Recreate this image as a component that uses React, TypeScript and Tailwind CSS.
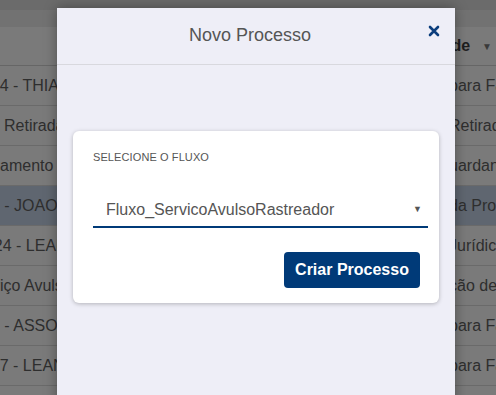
import React from "react";

const rows = [
  { l: "2024 - THIAGO", lm: "-27px", r: "para Faturamento", hl: false },
  { l: " Retirada de Equipamento", lm: "4px", r: "Retirada de Equipamento", hl: false },
  { l: "amento - X", lm: "0px", r: "uardando Análise", hl: false },
  { l: "0 - JOAO SILVA", lm: "-9px", r: "da Produção", hl: true },
  { l: "2024 - LEANDRO", lm: "-24px", r: " Jurídico", hl: false },
  { l: "viço Avulso", lm: "-8px", r: "ção de Serviço", hl: false },
  { l: "0 - ASSOCIADO", lm: "-9px", r: "para Faturamento", hl: false },
  { l: "2017 - LEANDRO", lm: "-27px", r: "para Faturamento", hl: false },
  { l: "", lm: "0px", r: "", hl: false },
];

export default function App() {
  return (
    <div
      className="relative w-[496px] h-[395px] overflow-hidden bg-[#7a7a7a]"
      style={{ fontFamily: '"Liberation Sans", Arial, sans-serif' }}
    >
      {/* background page (dimmed) */}
      <div className="flex flex-col">
        <div className="h-[10px] bg-[#6b6b6b]" />
        <div className="h-[17px] bg-[#727272]" />
        <div className="h-[39px] border-b border-[#666] flex items-center justify-end pr-[4px] text-[16px] text-[#1e1e1e]">
          <span className="font-bold">de</span>
          <span className="ml-[12px] text-[10px] text-[#3a3a3a]">▼</span>
        </div>
        {rows.map((r, i) => (
          <div
            key={i}
            className={`h-[40px] border-b border-[#6a6a6a] flex items-center justify-between text-[16px] text-[#2e2e2e] whitespace-nowrap overflow-hidden ${
              r.hl ? "bg-[#5f6670]" : ""
            }`}
          >
            <span className="min-w-0" style={{ marginLeft: r.lm }}>{r.l}</span>
            <span className="w-[47px] shrink-0 overflow-hidden flex justify-start">
              <span>{r.r}</span>
            </span>
          </div>
        ))}
      </div>

      {/* modal */}
      <div className="absolute left-[57px] top-[8px] w-[398px] h-[400px] bg-[#eeeef7] shadow-[0_0_12px_rgba(0,0,0,0.35)] flex flex-col">
        <div className="h-[57px] border-b border-[#d8d8de] flex items-center justify-center relative">
          <span className="text-[18px] text-[#555] mr-[12px] mt-[-2px]">Novo Processo</span>
          <span className="absolute right-[15px] top-[17px]">
            <svg width="12" height="12" viewBox="0 0 12 12">
              <path d="M2 2 L10 10 M10 2 L2 10" stroke="#0b3d7c" strokeWidth="2.6" strokeLinecap="round" />
            </svg>
          </span>
        </div>
        <div className="px-[16px] pt-[66px]">
          <div className="bg-white rounded-[6px] shadow-[0_1px_4px_rgba(0,0,0,0.25)] pl-[20px] pr-[11px] pt-[20px] pb-[15px]">
            <div className="text-[11px] text-[#555] tracking-[0.1px] leading-[13px]">SELECIONE O FLUXO</div>
            <div className="mt-[25px] h-[39px] border-b-2 border-[#003a78] flex items-center justify-between pl-[13px] pr-[6px]">
              <span className="text-[16px] text-[#555] mt-[4px]">Fluxo_ServicoAvulsoRastreador</span>
              <span className="text-[9px] text-[#555] mt-[4px]">▼</span>
            </div>
            <div className="flex justify-end mt-[24px] pr-[8px]">
              <button className="w-[136px] h-[36px] rounded-[4px] bg-[#003a78] text-white font-bold text-[16px]">
                Criar Processo
              </button>
            </div>
          </div>
        </div>
      </div>
    </div>
  );
}
